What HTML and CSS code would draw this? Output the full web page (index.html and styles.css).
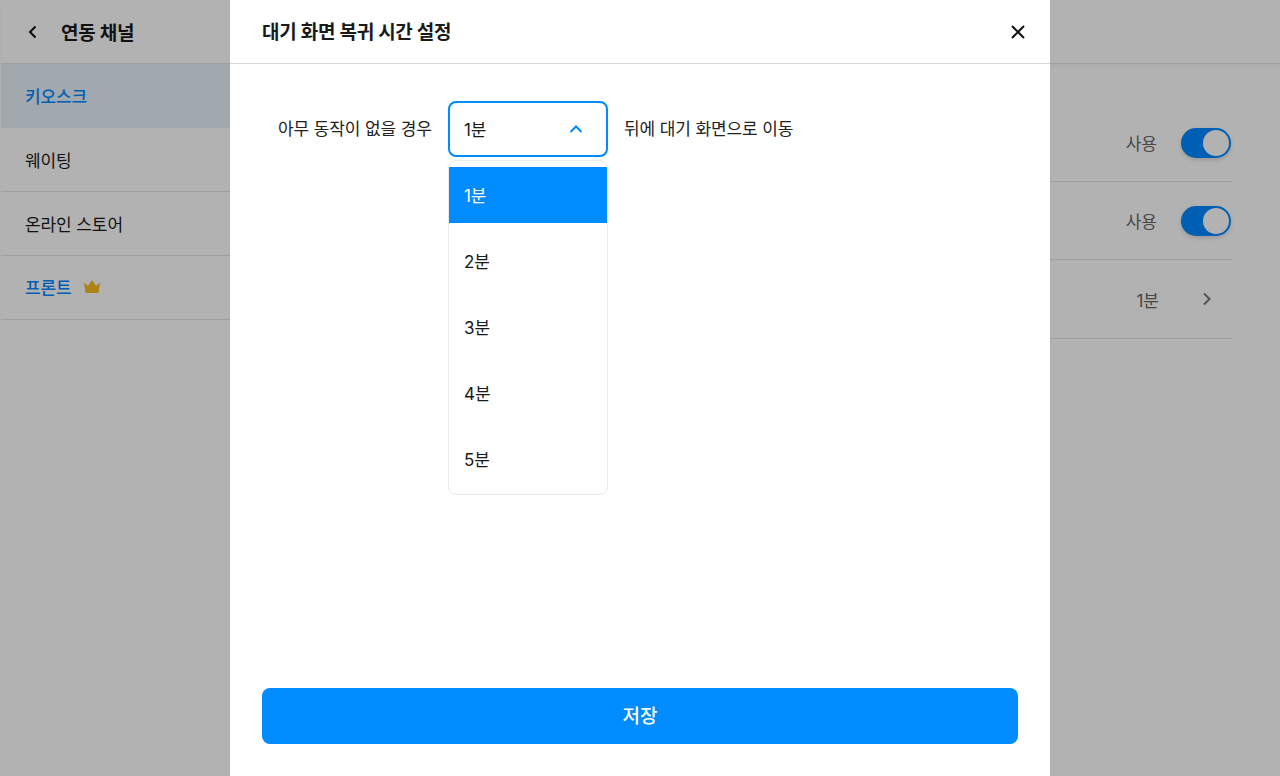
FILE: index.html
```html
<!DOCTYPE html>
<html lang="ko">
<head>
<meta charset="utf-8">
<title>대기 화면 복귀 시간 설정</title>
<link rel="stylesheet" href="styles.css">
</head>
<body>
<div class="page">
  <header class="page-header">
    <svg class="back" width="24" height="24" viewBox="0 0 24 24"><path d="M14.500 6.500 9 12l5.500 5.500" fill="none" stroke="#111" stroke-width="2"/></svg>
    <h1 class="page-title">연동 채널</h1>
  </header>
  <div class="page-body">
    <nav class="side">
      <div class="side-row side-active">키오스크</div>
      <div class="side-row">웨이팅</div>
      <div class="side-row">온라인 스토어</div>
      <div class="side-row side-blue">프론트
        <svg class="crown" width="18" height="14" viewBox="0 0 18 14"><path d="M1 2.500 5 6l4-6 4 6 4-3.500L15.500 13h-13z" fill="#f5bd1f"/></svg>
      </div>
    </nav>
    <main class="main">
      <div class="set-row"><span class="set-value">사용</span><span class="toggle"><span class="knob"></span></span></div>
      <div class="set-row"><span class="set-value">사용</span><span class="toggle"><span class="knob"></span></span></div>
      <div class="set-row"><span class="set-value">1분</span>
        <svg class="chev" width="24" height="24" viewBox="0 0 24 24"><path d="M9 6.500 14.500 12 9 17.500" fill="none" stroke="#777" stroke-width="2"/></svg>
      </div>
    </main>
  </div>
</div>
<div class="scrim"></div>
<section class="modal">
  <header class="modal-header">
    <h2 class="modal-title">대기 화면 복귀 시간 설정</h2>
    <svg class="close" width="24" height="24" viewBox="0 0 24 24"><path d="M6 6l12 12M18 6 6 18" fill="none" stroke="#111" stroke-width="2"/></svg>
  </header>
  <div class="modal-body">
    <span class="label">아무 동작이 없을 경우</span>
    <div class="select">
      <div class="select-box">1분
        <svg width="24" height="24" viewBox="0 0 24 24"><path d="M6.500 15 12 9.500l5.500 5.500" fill="none" stroke="#008cff" stroke-width="2"/></svg>
      </div>
      <ul class="menu">
        <li class="option option-on">1분</li>
        <li class="option">2분</li>
        <li class="option">3분</li>
        <li class="option">4분</li>
        <li class="option">5분</li>
      </ul>
    </div>
    <span class="label">뒤에 대기 화면으로 이동</span>
  </div>
  <footer class="modal-footer"><button class="save">저장</button></footer>
</section>
</body>
</html>
```
FILE: styles.css
```css
* { box-sizing: border-box; }
html, body { margin: 0; height: 100%; overflow: hidden; }
body {
  font-family: Inter, "Noto Sans CJK KR", sans-serif;
  color: #1a1a1a;
  background: #fff;
  padding: 1px 0 0 1px;
}
h1, h2, ul { margin: 0; padding: 0; }
.page { height: 100%; display: flex; flex-direction: column; }
.page-header {
  height: 63px;
  flex: none;
  display: flex;
  align-items: center;
  padding-left: 20px;
  padding-bottom: 2px;
  gap: 16px;
  border-bottom: 1px solid #e4e4e4;
  box-shadow: 0 2px 4px rgba(0,0,0,.05);
}
.back { position: relative; top: 1px; }
.page-title { font-size: 19px; font-weight: 700; letter-spacing: -.25px; }
.page-body { flex: 1; display: flex; }
.side { width: 229px; flex: none; }
.side-row {
  height: 64px;
  display: flex;
  align-items: center;
  gap: 12px;
  padding: 0 0 0 24px;
  font-size: 17px;
  font-weight: 400;
  letter-spacing: -.1px;
  border-bottom: 1px solid #e2e2e2;
}
.side-active { background: #e8f2fa; color: #0088ff; font-weight: 500; border-bottom: 0; padding-bottom: 2px; }
.side-blue { color: #0088ff; font-weight: 500; padding-bottom: 2px; }
.crown { position: relative; left: -1px; }
.main { flex: 1; padding: 40px 48px 0 0; }
.set-row {
  height: 78px;
  display: flex;
  align-items: center;
  justify-content: flex-end;
  border-bottom: 1px solid #e2e2e2;
  font-size: 17px;
  color: #666;
}
.set-row:nth-child(3) { height: 79px; padding-right: 13px; }
.set-value { margin-right: 24px; }
.set-row:nth-child(3) .set-value { margin-right: 36px; }
.toggle {
  width: 50px;
  height: 30px;
  margin-right: 1px;
  border-radius: 15px;
  background: #0088ff;
  position: relative;
  box-shadow: 0 2px 4px rgba(0,0,0,.15);
}
.knob {
  position: absolute;
  top: 2px;
  right: 2px;
  width: 26px;
  height: 26px;
  border-radius: 50%;
  background: #fff;
}
.scrim { position: fixed; inset: 0; background: rgba(0,0,0,.3); }
.modal {
  position: fixed;
  top: 0;
  bottom: 0;
  left: 230px;
  width: 820px;
  background: #fff;
  display: flex;
  flex-direction: column;
}
.modal-header {
  height: 64px;
  flex: none;
  display: flex;
  align-items: center;
  justify-content: space-between;
  padding: 0 20px 0 32px;
  border-bottom: 1px solid #d8d8d8;
}
.modal-title { font-size: 19px; font-weight: 700; letter-spacing: -.25px; position: relative; top: -1px; }
.modal-body {
  flex: 1;
  display: flex;
  align-items: flex-start;
  padding: 37px 32px 0 48px;
  gap: 16px;
}
.label { line-height: 56px; font-size: 17px; color: #222; letter-spacing: -.1px; }
.select { width: 160px; position: relative; }
.select-box {
  height: 56px;
  border: 2px solid #008cff;
  border-radius: 8px;
  display: flex;
  align-items: center;
  justify-content: space-between;
  padding: 0 18px 2px 14px;
  font-size: 17px;
}
.select-box svg { position: relative; top: 1px; }
.menu {
  position: absolute;
  top: 59px;
  left: 0;
  width: 160px;
  height: 335px;
  border: 1px solid #ebebeb;
  border-radius: 8px;
  list-style: none;
  padding-top: 6px;
  overflow: hidden;
  background: #fff;
}
.option {
  height: 66px;
  padding: 0 0 2px 15px;
  display: flex;
  align-items: center;
  font-size: 17px;
}
.option-on {
  height: 56px;
  margin-bottom: 5px;
  background: #008cff;
  color: #fff;
}
.modal-footer { padding: 0 32px 32px; }
.save {
  width: 100%;
  height: 56px;
  border: 0;
  padding: 0 0 4px;
  border-radius: 8px;
  background: #008cff;
  color: #fff;
  font: 500 19px Inter, "Noto Sans CJK KR", sans-serif;
}
```
